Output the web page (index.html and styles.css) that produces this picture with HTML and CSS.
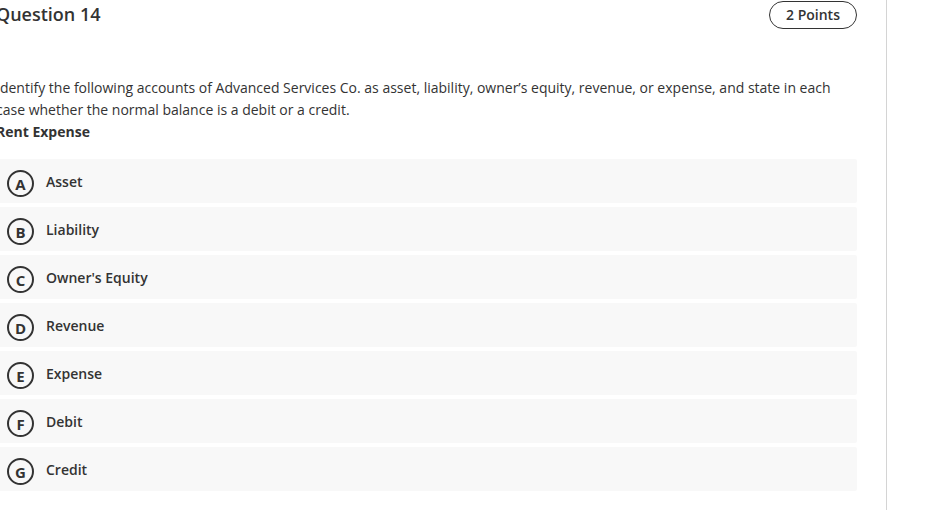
FILE: index.html
```html
<!DOCTYPE html>
<html>

<head>
    <meta name="viewport" content="width=device-width, initial-scale=1">
    <title>Question 14</title>
    <link rel="stylesheet" href="styles.css">
</head>

<body>
    <div class="page">
        <div class="main">
            <div class="question">
                <div class="question-header">
                    <h2 class="question-title">Question 14</h2>
                    <span class="points">2 Points</span>
                </div>

                <p class="question-text">
                    Identify the following accounts of Advanced Services Co. as asset, liability, owner’s equity, revenue, or expense, and state in each case whether the normal balance is a debit or a credit.
                    <strong>Rent Expense</strong>
                </p>

                <ul class="choices">
                    <li class="choice"><span class="choice-letter">A</span><span class="choice-label">Asset</span></li>
                    <li class="choice"><span class="choice-letter">B</span><span class="choice-label">Liability</span></li>
                    <li class="choice"><span class="choice-letter">C</span><span class="choice-label">Owner's Equity</span></li>
                    <li class="choice"><span class="choice-letter">D</span><span class="choice-label">Revenue</span></li>
                    <li class="choice"><span class="choice-letter">E</span><span class="choice-label">Expense</span></li>
                    <li class="choice"><span class="choice-letter">F</span><span class="choice-label">Debit</span></li>
                    <li class="choice"><span class="choice-letter">G</span><span class="choice-label">Credit</span></li>
                </ul>
            </div>
        </div>
    </div>
</body>

</html>
```

FILE: styles.css
```css
body {
    margin: 0;
    overflow: hidden;
    font-family: "Open Sans", "Liberation Sans", sans-serif;
    color: #333;
    background: #fff;
}

.page {
    display: flex;
    height: 100vh;
}

.main {
    width: 890px;
    margin-left: -4px;
    border-right: 1px solid #d4d4d4;
}

.question {
    width: 861px;
}

.question-header {
    display: flex;
    justify-content: space-between;
    align-items: flex-start;
    padding-top: 1px;
}

.question-title {
    margin: 1px 0 0;
    font-size: 18px;
    font-weight: 600;
    line-height: 24px;
}

.points {
    box-sizing: border-box;
    width: 88px;
    height: 28px;
    border: 1px solid #333;
    border-radius: 14px;
    line-height: 26px;
    text-align: center;
    font-size: 14px;
    font-weight: 600;
}

.question-text {
    margin: 48px 0 16px;
    font-size: 14px;
    line-height: 22px;
}

.question-text strong {
    display: block;
    font-weight: 700;
}

.choices {
    list-style: none;
    margin: 0;
    padding: 0;
}

.choice {
    display: flex;
    align-items: center;
    height: 44px;
    margin-bottom: 4px;
    padding-left: 11px;
    background: #f8f8f8;
    border-radius: 2px;
}

.choice-letter {
    box-sizing: border-box;
    width: 27px;
    height: 27px;
    margin-top: 5px;
    border: 2px solid #333;
    border-radius: 50%;
    display: flex;
    align-items: center;
    justify-content: center;
    font-size: 15px;
    font-weight: 700;
}

.choice-label {
    margin-left: 12px;
    font-size: 14px;
    font-weight: 600;
}
```
